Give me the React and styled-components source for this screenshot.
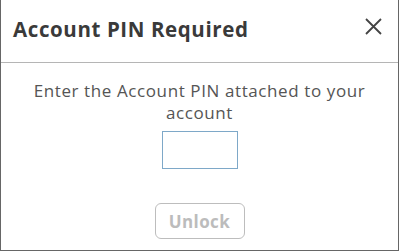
import React from 'react';
import styled, { createGlobalStyle } from "styled-components";

const GlobalStyle = createGlobalStyle`
  body {
    margin: 0;
    background: #ffffff;
    font-family: "Open Sans", "Liberation Sans", sans-serif;
  }
`;

const App = () => {
  return <>
  <GlobalStyle />
  <Modal>
    <Header>
      <Title>Account PIN Required</Title>
      <CloseButton aria-label="Close">
        <svg width="17" height="17" viewBox="0 0 17 17">
          <path d="M1 1 L16 16 M16 1 L1 16" stroke="#444" strokeWidth="1.8" fill="none" />
        </svg>
      </CloseButton>
    </Header>
    <Body>
      <Message>Enter the Account PIN attached to your account</Message>
      <PinInput type="password" />
      <UnlockButton disabled>Unlock</UnlockButton>
    </Body>
  </Modal>
  </>
}

export default App;

const Modal = styled.div`
  box-sizing: border-box;
  width: 399px;
  height: 251px;
  background-color: #fff;
  border-left: 1px solid #666;
  border-right: 1px solid #666;
  border-bottom: 1px solid #666;
  display: flex;
  flex-direction: column;
`;

const Header = styled.div`
  box-sizing: border-box;
  height: 63px;
  display: flex;
  align-items: center;
  justify-content: space-between;
  padding: 0 16px 4px 12px;
  border-bottom: 1px solid #b5b5b5;
`;

const Title = styled.h2`
  margin: 0;
  font-size: 20.5px;
  font-weight: 700;
  color: #3a3a3a;
  letter-spacing: 0.6px;
`;

const CloseButton = styled.button`
  background: none;
  border: none;
  padding: 0;
  margin-top: -6px;
  display: flex;
  cursor: pointer;
`;

const Body = styled.div`
  display: flex;
  flex-direction: column;
  align-items: center;
  padding-top: 17px;
`;

const Message = styled.p`
  margin: 0;
  width: 360px;
  text-align: center;
  font-size: 17px;
  line-height: 22px;
  letter-spacing: 0.6px;
  color: #555;
`;

const PinInput = styled.input`
  box-sizing: border-box;
  width: 76px;
  height: 38px;
  margin-top: 7px;
  border: 1px solid #7ea8c8;
  outline: none;
`;

const UnlockButton = styled.button`
  box-sizing: border-box;
  width: 90px;
  height: 36px;
  margin-top: 34px;
  background: #fff;
  border: 1px solid #bdbdbd;
  border-radius: 6px;
  font-family: "Open Sans", "Liberation Sans", sans-serif;
  font-size: 17px;
  font-weight: 700;
  letter-spacing: 0.4px;
  color: #bcbcbc;
`;
